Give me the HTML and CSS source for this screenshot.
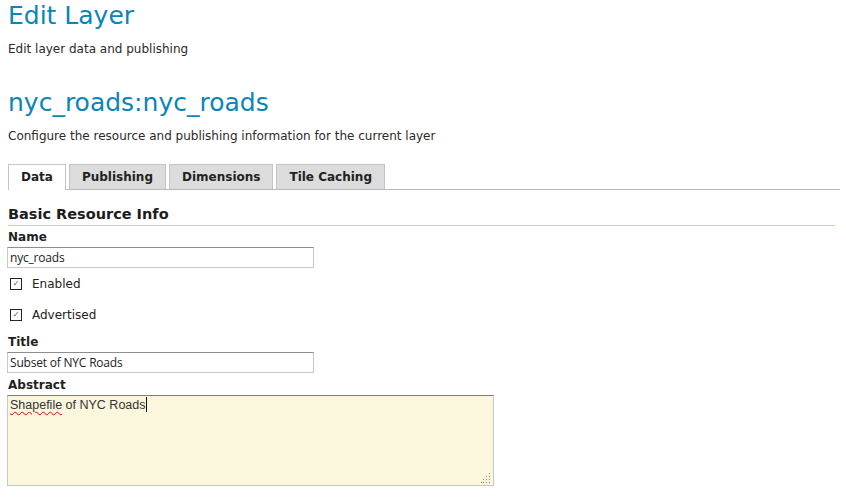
FILE: index.html
```html
<!DOCTYPE html>
<html>
<head>
<meta charset="utf-8">
<link rel="stylesheet" href="styles.css">
</head>
<body>
<div class="page">
  <h1 class="title">Edit Layer</h1>
  <p class="desc">Edit layer data and publishing</p>
  <h2 class="title layer">nyc_roads:nyc_roads</h2>
  <p class="desc">Configure the resource and publishing information for the current layer</p>
  <ul class="tabs">
    <li class="tab active">Data</li>
    <li class="tab">Publishing</li>
    <li class="tab">Dimensions</li>
    <li class="tab">Tile Caching</li>
  </ul>
  <h3 class="section">Basic Resource Info</h3>
  <div class="field first">
    <label class="lbl">Name</label>
    <div class="input">nyc_roads</div>
  </div>
  <div class="check"><span class="box">✓</span><span>Enabled</span></div>
  <div class="check"><span class="box">✓</span><span>Advertised</span></div>
  <div class="field after-check">
    <label class="lbl">Title</label>
    <div class="input">Subset of NYC Roads</div>
  </div>
  <div class="field spaced">
    <label class="lbl">Abstract</label>
    <div class="textarea"><span class="spell">Shapefile</span> of NYC Roads<span class="caret"></span>
      <svg class="grip" width="10" height="10" viewBox="0 0 10 10"><g fill="#8a8a70"><rect x="8" y="0" width="1" height="1"/><rect x="5" y="3" width="1" height="1"/><rect x="8" y="3" width="1" height="1"/><rect x="2" y="6" width="1" height="1"/><rect x="5" y="6" width="1" height="1"/><rect x="8" y="6" width="1" height="1"/><rect x="0" y="9" width="1" height="1"/><rect x="2" y="9" width="1" height="1"/><rect x="5" y="9" width="1" height="1"/><rect x="8" y="9" width="1" height="1"/></g></svg>
    </div>
  </div>
</div>
</body>
</html>
```

FILE: styles.css
```css
html, body { margin: 0; padding: 0; background: #fff; }
body { font-family: "DejaVu Sans", sans-serif; color: #222; }
.page { padding: 0 8px 0 8px; width: 830px; }
.title {
  margin: 0;
  font-weight: normal;
  font-size: 25px;
  line-height: 30px;
  color: #0a85b8;
  padding-top: 1px;
}
.desc { margin: 10px 0 0 0; font-size: 12px; line-height: 16px; color: #2a2a2a; }
.layer { margin-top: 30px; }
.tabs {
  list-style: none;
  margin: 20px 0 0 0;
  padding: 0;
  display: flex;
  border-bottom: 1px solid #b8b8b8;
  width: 832px;
  height: 25px;
}
.tab {
  background: #dcdcdc;
  border: 1px solid #c4c4c4;
  border-bottom: none;
  font-weight: bold;
  font-size: 12px;
  line-height: 24px;
  padding: 0 12px;
  margin-right: 3px;
  color: #222;
}
.tab.active { background: #fff; height: 25px; position: relative; }
.section {
  margin: 15px 0 0 0;
  font-size: 14.5px;
  line-height: 18px;
  font-weight: bold;
  color: #1c1c1c;
  border-bottom: 1px solid #bddd8e;
  padding-bottom: 2px;
  width: 827px;
}
.field { display: flex; flex-direction: column; align-items: flex-start; }
.lbl { font-weight: bold; font-size: 12px; line-height: 15px; margin-top: 2px; color: #1f1f1f; }
.field.first .lbl { margin-top: 4px; }
.field.after-check .lbl { margin-top: 5px; }
.field.spaced .lbl { margin-top: 5px; }
.input {
  box-sizing: border-box;
  margin: 2px 0 0 -1px;
  width: 307px;
  height: 21px;
  border: 1px solid #c8c8c8;
  border-top-color: #8d8d8d;
  font-family: "Open Sans", "DejaVu Sans", sans-serif;
  font-size: 12px;
  line-height: 19px;
  padding: 0 2px;
  color: #222;
  letter-spacing: -0.2px;
}
.check {
  display: flex;
  align-items: center;
  height: 31px;
  font-size: 12px;
  color: #222;
}
.box {
  box-sizing: border-box;
  width: 12px; height: 12px;
  border: 1px solid #222;
  margin: 0 10px 0 2px;
  font-size: 8px;
  line-height: 10px;
  text-align: center;
  color: #555;
}
.textarea {
  position: relative;
  box-sizing: border-box;
  margin: 2px 0 0 -1px;
  width: 487px;
  height: 91px;
  border: 1px solid #c8c8c8;
  border-top-color: #7a7a7a;
  background: #fbf7dc;
  font-family: "Liberation Sans", Arial, sans-serif;
  font-size: 12.5px;
  line-height: 17px;
  padding: 1px 2px;
  color: #333;
}
.spell {
  text-decoration: underline wavy #e00;
  text-decoration-thickness: 1px;
  text-underline-offset: 2px;
}
.caret { display: inline-block; width: 1px; height: 15px; background: #111; vertical-align: -3px; }
.grip { position: absolute; right: 2px; bottom: 2px; }
```
